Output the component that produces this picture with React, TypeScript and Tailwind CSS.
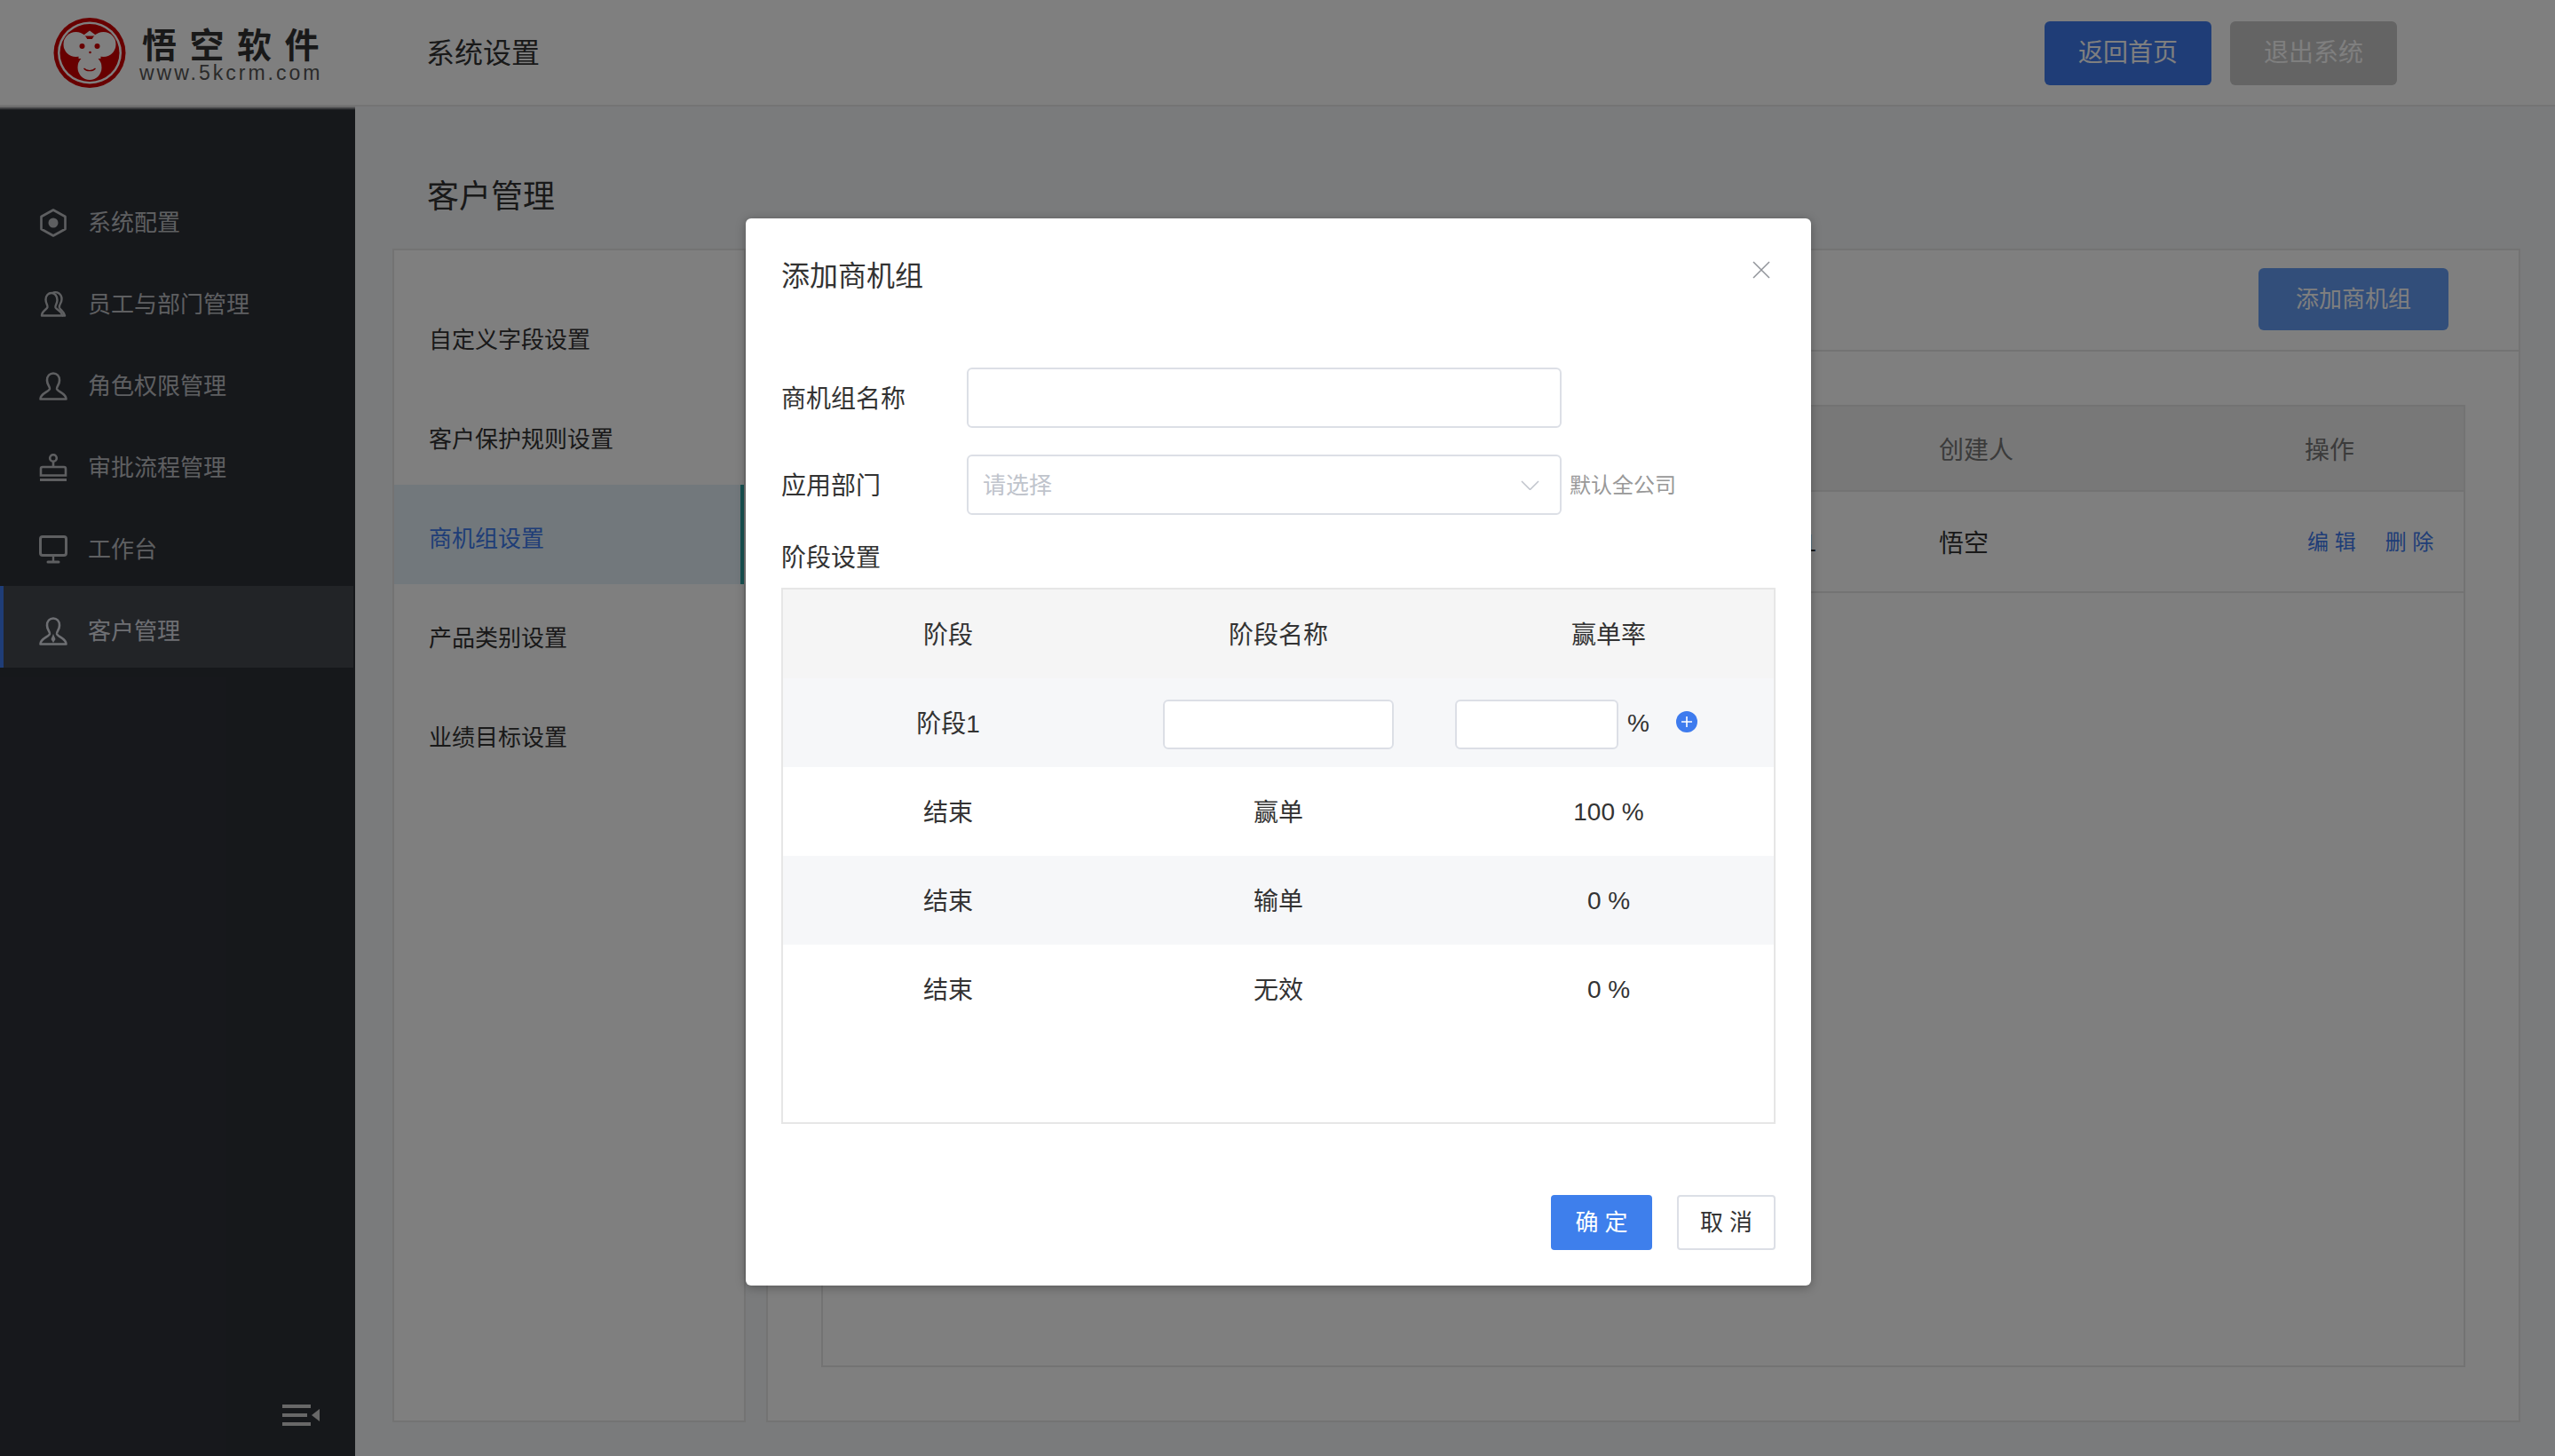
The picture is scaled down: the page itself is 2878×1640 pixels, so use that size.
import React from "react";

function Hex() {
  return (
    <svg viewBox="0 0 32 32" className="w-8 h-8" fill="none" stroke="currentColor" strokeWidth="2.6">
      <polygon points="16,1.5 29.5,9 29.5,23 16,30.5 2.5,23 2.5,9" strokeLinejoin="round" />
      <circle cx="16" cy="16" r="5.5" fill="currentColor" stroke="none" />
    </svg>
  );
}
function Staff() {
  return (
    <svg viewBox="0 0 32 32" className="w-8 h-8" fill="none" stroke="currentColor" strokeWidth="2.4" strokeLinejoin="round">
      <path d="M3 28.5h23c0-5-6-6.500-7.500-9-1-2 2-4 2-8.500 0-5-3-8-6.500-8S7.500 6 7.500 10.500c0 4.500 2.500 6 2 8.500C9 21.500 3 23 3 28.500z" />
      <path d="M15 3c5-2.500 10.500 1 10.500 7 0 5-3.500 6-2.500 9.500 .8 2.500 5 4 6 9h-3" />
    </svg>
  );
}
function Bust({ tie }: { tie?: boolean }) {
  return (
    <svg viewBox="0 0 32 32" className="w-8 h-8" fill="none" stroke="currentColor" strokeWidth="2.6" strokeLinejoin="round">
      <path d="M1.500 30.500h29c0-6.500-9.500-8-10.500-11.500-.6-2.500 3-4.500 3-9.500C23 4.500 20 1.500 16 1.500S9 4.500 9 9.500c0 5 3.600 7 3 9.500-1 3.500-10.500 5-10.500 11.500z" />
      {tie && <path d="M16 19l-2.500 6 2.500 4 2.500-4z" fill="currentColor" stroke="none" />}
    </svg>
  );
}
function Stamp() {
  return (
    <svg viewBox="0 0 32 32" className="w-8 h-8" fill="none" stroke="currentColor" strokeWidth="2.6">
      <circle cx="16" cy="5" r="3.800" />
      <path d="M16 9v5" />
      <path d="M2 24.500V17a2 2 0 0 1 2-2h24a2 2 0 0 1 2 2v7.500z" />
      <path d="M1 29.500h30" strokeWidth="3" />
    </svg>
  );
}
function Monitor() {
  return (
    <svg viewBox="0 0 32 32" className="w-8 h-8" fill="none" stroke="currentColor" strokeWidth="3">
      <rect x="1.500" y="1.500" width="29" height="21" rx="2.500" />
      <path d="M16 23v6" strokeWidth="2.400" />
      <path d="M10 30h12" strokeLinecap="round" />
    </svg>
  );
}

const menu = [
  { label: "系统配置", icon: <Hex /> },
  { label: "员工与部门管理", icon: <Staff /> },
  { label: "角色权限管理", icon: <Bust /> },
  { label: "审批流程管理", icon: <Stamp /> },
  { label: "工作台", icon: <Monitor /> },
  { label: "客户管理", icon: <Bust tie />, active: true },
];

const settings = ["自定义字段设置", "客户保护规则设置", "商机组设置", "产品类别设置", "业绩目标设置"];

function Logo() {
  return (
    <div className="flex items-center ml-[60px] w-[340px] h-full">
      <svg viewBox="0 0 81 79" className="w-[82px] h-[79px] shrink-0 mt-[1px]">
        <ellipse cx="40.500" cy="39.500" rx="40.500" ry="39.500" fill="#d10000" />
        <ellipse cx="40.500" cy="39.500" rx="36" ry="35" fill="#ffffff" />
        <ellipse cx="40.500" cy="39.500" rx="33.500" ry="32.500" fill="#d10000" />
        <circle cx="25" cy="30" r="14" fill="#ffffff" />
        <circle cx="56" cy="30" r="14" fill="#ffffff" />
        <rect x="28" y="24" width="25" height="22" fill="#ffffff" />
        <ellipse cx="40.500" cy="56" rx="13.500" ry="14" fill="#ffffff" />
        <path d="M40.500 14.500l-8 6h16z" fill="#ffffff" />
        <circle cx="32" cy="32" r="3" fill="#d10000" />
        <circle cx="49" cy="32" r="3" fill="#d10000" />
        <circle cx="41" cy="39" r="1.300" fill="#d10000" />
        <path d="M34 57c3 3.500 10 3.500 13 0" fill="none" stroke="#d10000" strokeWidth="1.200" />
      </svg>
      <div className="ml-[15px] flex flex-col pt-[7px]">
        <div className="text-[39px] leading-[40px] font-bold text-[#333] tracking-[14.500px] whitespace-nowrap ml-[3px] h-[40px]">悟空软件</div>
        <div className="text-[23px] leading-[22px] text-[#555] tracking-[3px] whitespace-nowrap -mt-[1px]">www.5kcrm.com</div>
      </div>
    </div>
  );
}

function Input({ className }: { className: string }) {
  return <div className={"bg-white border-2 border-[#dcdfe6] rounded-[6px] " + className} />;
}

function StageRow({ stage, name, rate, shaded }: { stage: string; name: string; rate: string; shaded?: boolean }) {
  return (
    <div className={"grid grid-cols-3 h-[100px] pt-[3px] items-center text-center " + (shaded ? "bg-[#f6f7f9]" : "bg-white")}>
      <div>{stage}</div>
      <div>{name}</div>
      <div className="mb-[2px]">{rate}</div>
    </div>
  );
}

export default function App() {
  return (
    <div className="relative w-[2878px] h-[1640px] overflow-hidden flex flex-col bg-[#f5f6f9] text-[#333] [font-family:'Liberation_Sans','Noto_Sans_CJK_SC',sans-serif]">
      <header className="h-[120px] shrink-0 bg-white border-b-2 border-[#e8e8e8] flex items-center">
        <Logo />
        <div className="text-[32px] ml-[80px] pt-[2px]">系统设置</div>
        <div className="ml-auto mr-[178px] flex gap-[21px] pt-[2px]">
          <button className="w-[188px] h-[72px] rounded-[6px] bg-[#3e7bee] text-white text-[28px]">返回首页</button>
          <button className="w-[188px] h-[72px] rounded-[6px] bg-[#c8c8c8] text-white text-[28px]">退出系统</button>
        </div>
      </header>

      <div className="flex flex-1 min-h-0">
        <aside className="relative w-[400px] shrink-0 bg-[#2d3037] pt-[80px] pr-[2px]">
          <div className="absolute left-0 right-0 top-0 h-[4px] bg-gradient-to-b from-[#e4e4e4] to-[#2d3037]" />
          {menu.map((m) => (
            <div
              key={m.label}
              className={
                "h-[92px] flex items-center gap-[23px] pl-[40px] pt-[10px] border-l-4 text-[26px] " +
                (m.active ? "bg-[#45494f] border-[#3e7bee] text-[#dcdfe6]" : "border-transparent text-[#bcbec2]")
              }
            >
              <span className="shrink-0">{m.icon}</span>
              <span>{m.label}</span>
            </div>
          ))}
          <svg viewBox="0 0 42 24" className="absolute left-[318px] top-[1462px] w-[42px] h-[24px]" fill="#d0d0d0">
            <rect x="0" y="0" width="32" height="4" />
            <rect x="0" y="10" width="28" height="4" />
            <rect x="0" y="20" width="32" height="4" />
            <path d="M42 5v14l-9-7z" />
          </svg>
        </aside>

        <main className="flex-1 min-w-0 flex flex-col pl-[42px] pr-[39px] pb-[38px]">
          <h1 className="h-[160px] shrink-0 flex items-center pl-[39px] pt-[44px] text-[36px] font-normal">客户管理</h1>
          <div className="flex flex-1 min-h-0 gap-[23px]">
            <nav className="w-[398px] shrink-0 bg-white border-2 border-[#e6e6e6] pt-[40px]">
              {settings.map((s, i) => (
                <div
                  key={s}
                  className={
                    "h-[112px] flex items-center pl-[39px] pt-[10px] text-[26px] " +
                    (i === 2 ? "bg-[#e4f1f8] text-[#3e7bee] border-r-4 border-[#2fa5a5]" : "text-[#333]")
                  }
                >
                  {s}
                </div>
              ))}
            </nav>
            <section className="flex-1 min-w-0 bg-white border-2 border-[#e6e6e6] flex flex-col">
              <div className="h-[114px] shrink-0 border-b-2 border-[#e6e6e6] flex items-center justify-end pr-[79px] pb-[2px]">
                <button className="w-[214px] h-[70px] rounded-[6px] bg-[#649cf4] text-white text-[26px]">添加商机组</button>
              </div>
              <div className="mt-[60px] mx-[60px] h-[1084px] border-2 border-[#e6e6e6]">
                <div className="h-[96px] pt-[5px] bg-[#f0f0f0] border-b-2 border-[#e6e6e6] flex items-center text-[28px] text-[#777]">
                  <div className="flex-1 min-w-0" />
                  <div className="w-[412px]">创建人</div>
                  <div className="w-[179px]">操作</div>
                </div>
                <div className="h-[114px] pt-[3px] border-b-2 border-[#e6e6e6] flex items-center text-[28px] text-[#333]">
                  <div className="flex-1 min-w-0 text-right pr-[138px]">2019-05-01</div>
                  <div className="w-[412px] pt-[2px]">悟空</div>
                  <div className="w-[179px] flex gap-[33px] text-[24px] text-[#3e7bee] pl-[3px] mb-[2px]">
                    <span>编 辑</span>
                    <span>删 除</span>
                  </div>
                </div>
              </div>
            </section>
          </div>
        </main>
      </div>

      <div className="absolute inset-0 bg-black/50" />

      <div className="absolute left-[840px] top-[246px] w-[1200px] h-[1202px] bg-white rounded-[6px] shadow-[0_2px_12px_rgba(0,0,0,0.3)] px-[40px] text-[28px] text-[#333]">
        <div className="h-[130px] flex items-center text-[32px]">添加商机组</div>
        <svg viewBox="0 0 20 20" className="absolute right-[46px] top-[48px] w-[20px] h-[20px]" stroke="#909399" strokeWidth="1.500">
          <path d="M1 1l18 18M19 1L1 19" />
        </svg>

        <div className="mt-[38px] flex items-center">
          <div className="w-[209px] pt-[3px]">商机组名称</div>
          <Input className="w-[670px] h-[68px]" />
        </div>

        <div className="mt-[30px] flex items-center">
          <div className="w-[209px] pt-[3px]">应用部门</div>
          <div className="w-[670px] h-[68px] bg-white border-2 border-[#dcdfe6] rounded-[6px] flex items-center pl-[16px] pr-[23px] justify-between text-[26px] text-[#c0c4cc]">
            <span className="pt-[2px]">请选择</span>
            <svg viewBox="0 0 21 11" className="w-[21px] h-[11px]" fill="none" stroke="#c0c4cc" strokeWidth="1.500">
              <path d="M1 1l9.500 9.500L20 1" />
            </svg>
          </div>
          <div className="ml-[9px] pt-[2px] text-[24px] text-[#999]">默认全公司</div>
        </div>

        <div className="h-[82px] pt-[15px] flex items-center">阶段设置</div>

        <div className="h-[604px] border-2 border-[#e6e6e6]">
          <div className="grid grid-cols-3 h-[100px] pt-[3px] items-center text-center bg-[#f5f5f5]">
            <div>阶段</div>
            <div>阶段名称</div>
            <div>赢单率</div>
          </div>
          <div className="grid grid-cols-3 h-[100px] pt-[3px] items-center text-center bg-[#f6f7f9]">
            <div>阶段1</div>
            <div className="flex justify-center">
              <Input className="w-[260px] h-[56px]" />
            </div>
            <div className="flex items-center pl-[13px]">
              <Input className="w-[184px] h-[56px]" />
              <span className="ml-[10px] mb-[1px]">%</span>
              <svg viewBox="0 0 24 24" className="ml-[30px] w-[24px] h-[24px] mb-[5px]">
                <circle cx="12" cy="12" r="12" fill="#3e7bee" />
                <path d="M12 6v12M6 12h12" stroke="#ffffff" strokeWidth="1.600" />
              </svg>
            </div>
          </div>
          <StageRow stage="结束" name="赢单" rate="100 %" />
          <StageRow stage="结束" name="输单" rate="0 %" shaded />
          <StageRow stage="结束" name="无效" rate="0 %" />
        </div>

        <div className="mt-[80px] flex justify-end gap-[28px] text-[26px]">
          <button className="w-[114px] h-[62px] rounded-[4px] bg-[#3e7fec] text-white">确 定</button>
          <button className="w-[111px] h-[62px] rounded-[4px] bg-white border-2 border-[#dcdfe6] text-[#333]">取 消</button>
        </div>
      </div>
    </div>
  );
}
